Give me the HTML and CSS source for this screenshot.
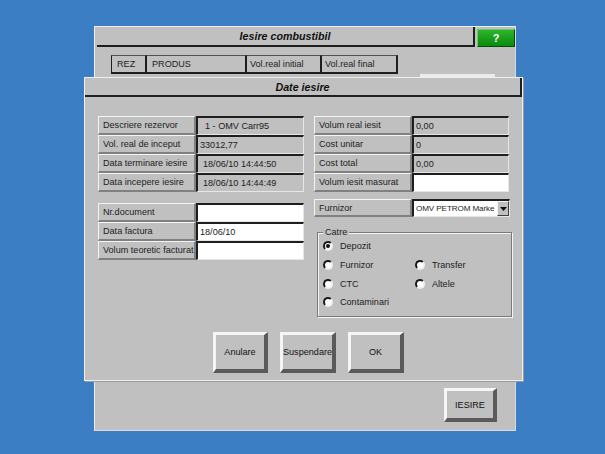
FILE: index.html
```html
<!DOCTYPE html>
<html>
<head>
<meta charset="utf-8">
<link rel="stylesheet" href="styles.css">
</head>
<body>
<div class="win back">
  <div class="win-head">
    <div class="titlebar">Iesire combustibil</div>
    <div class="help">?</div>
  </div>
  <div class="hdr-row">
    <div class="hdr c-rez">REZ</div>
    <div class="hdr c-prod">PRODUS</div>
    <div class="hdr c-vi">Vol.real initial</div>
    <div class="hdr c-vf">Vol.real final</div>
    <div class="hdr-strip"></div>
  </div>
  <div class="back-foot"><button class="btn btn-iesire">IESIRE</button></div>
</div>

<div class="win dlg">
  <div class="dlg-title">Date iesire</div>
  <div class="dlg-body">
    <div class="col left">
      <div class="group">
        <div class="row"><div class="lbl">Descriere rezervor</div><div class="val ind-l">1 - OMV Carr95</div></div>
        <div class="row"><div class="lbl">Vol. real de inceput</div><div class="val">33012,77</div></div>
        <div class="row"><div class="lbl">Data terminare iesire</div><div class="val ind-m">18/06/10 14:44:50</div></div>
        <div class="row"><div class="lbl">Data incepere iesire</div><div class="val ind-m">18/06/10 14:44:49</div></div>
      </div>
      <div class="group group2">
        <div class="row"><div class="lbl">Nr.document</div><div class="val white"></div></div>
        <div class="row"><div class="lbl">Data factura</div><div class="val white">18/06/10</div></div>
        <div class="row"><div class="lbl">Volum teoretic facturat</div><div class="val white"></div></div>
      </div>
    </div>
    <div class="col right">
      <div class="group">
        <div class="row"><div class="lbl">Volum real iesit</div><div class="val">0,00</div></div>
        <div class="row"><div class="lbl">Cost unitar</div><div class="val">0</div></div>
        <div class="row"><div class="lbl">Cost total</div><div class="val">0,00</div></div>
        <div class="row"><div class="lbl">Volum iesit masurat</div><div class="val white"></div></div>
      </div>
      <div class="row furn">
        <div class="lbl">Furnizor</div>
        <div class="combo">
          <span class="combo-text">OMV PETROM Marke</span>
          <span class="combo-btn"><svg width="7" height="4" viewBox="0 0 7 4"><path d="M0 0H7L3.5 4Z" fill="#111"/></svg></span>
        </div>
      </div>
      <div class="catre">
        <span class="legend">Catre</span>
        <div class="radios">
          <div class="radio on"><i></i>Depozit</div>
          <div></div>
          <div class="radio"><i></i>Furnizor</div>
          <div class="radio"><i></i>Transfer</div>
          <div class="radio"><i></i>CTC</div>
          <div class="radio"><i></i>Altele</div>
          <div class="radio"><i></i>Contaminari</div>
        </div>
      </div>
    </div>
  </div>
  <div class="btn-row">
    <button class="btn btn-dlg">Anulare</button>
    <button class="btn btn-dlg">Suspendare</button>
    <button class="btn btn-dlg">OK</button>
  </div>
</div>
</body>
</html>
```

FILE: styles.css
```css
* { box-sizing: border-box; }

body {
  margin: 0;
  width: 605px;
  height: 454px;
  overflow: hidden;
  position: relative;
  background: #3c7ec4;
  font-family: "Liberation Sans", Arial, sans-serif;
  font-size: 9.1px;
  color: #1c1c1c;
}

.win {
  position: absolute;
  background: #c0c0c0;
  display: flex;
  flex-direction: column;
}

/* back window */
.back {
  left: 94px;
  top: 26px;
  width: 422px;
  height: 405px;
  border: 1px solid #eeeeee;
  border-right-color: #dadada;
  border-bottom-color: #dadada;
}

.win-head {
  display: flex;
  height: 20px;
  padding-left: 2px;
  gap: 2px;
}

.titlebar {
  width: 378px;
  height: 20px;
  border-bottom: 2px solid #1e1e1e;
  border-right: 2px solid #1e1e1e;
  display: flex;
  align-items: center;
  justify-content: center;
  font-weight: bold;
  font-style: italic;
  font-size: 10.7px;
  color: #111;
}

.help {
  margin-top: 2px;
  width: 38px;
  height: 18px;
  background: linear-gradient(#2db52d, #0b8a0b);
  border: 1px solid;
  border-color: #62d062 #084808 #084808 #62d062;
  color: #fff;
  font-weight: bold;
  font-size: 11px;
  display: flex;
  align-items: center;
  justify-content: center;
}

.hdr-row {
  display: flex;
  margin-top: 8px;
  margin-left: 16px;
  height: 19px;
}

.hdr {
  height: 19px;
  border-top: 1px solid #505050;
  border-bottom: 2px solid #1e1e1e;
  border-right: 2px solid #1e1e1e;
  padding-left: 4px;
  display: flex;
  align-items: center;
  white-space: nowrap;
}

.c-rez { width: 36px; border-left: 1px solid #1e1e1e; padding-left: 5px; }
.c-prod { width: 100px; padding-left: 5px; }
.c-vi { width: 75px; padding-left: 3px; }
.c-vf { width: 76px; padding-left: 3px; }

.hdr-strip {
  margin-left: 22px;
  width: 75px;
  height: 3px;
  align-self: flex-end;
  margin-bottom: -3px;
  background: #ececec;
}

.back-foot {
  margin-top: auto;
  display: flex;
  justify-content: flex-end;
  padding: 0 18px 8px 0;
}

.btn {
  background: #c0c0c0;
  border-style: solid;
  border-width: 3px 4px 4px 3px;
  border-color: #f6f6f6 #5a5a5a #5a5a5a #f6f6f6;
  font-family: "Liberation Sans", Arial, sans-serif;
  font-size: 9.1px;
  color: #111;
  padding: 0;
  overflow: hidden;
  white-space: nowrap;
  text-align: center;
}

.btn-iesire { width: 53px; height: 34px; }

/* front dialog */
.dlg {
  left: 84px;
  top: 77px;
  width: 439px;
  height: 304px;
  border: 1px solid #efefef;
  box-shadow: 1px 1px 0 #9a9a9a;
}

.dlg-title {
  height: 19px;
  flex: none;
  border-bottom: 2px solid #1e1e1e;
  border-right: 2px solid #1e1e1e;
  display: flex;
  align-items: center;
  justify-content: center;
  font-weight: bold;
  font-style: italic;
  font-size: 10.7px;
  color: #111;
}

.dlg-body {
  display: flex;
  padding: 19px 0 0 13px;
  gap: 10px;
}

.col { display: flex; flex-direction: column; }

.row {
  display: flex;
  height: 19px;
}

.lbl {
  width: 98px;
  flex: none;
  border-style: solid;
  border-width: 1px 2px 2px 1px;
  border-color: #f4f4f4 #808080 #808080 #f4f4f4;
  padding-left: 4px;
  display: flex;
  align-items: center;
  white-space: nowrap;
  overflow: hidden;
}

.val {
  width: 108px;
  flex: none;
  border-style: solid;
  border-width: 2px 1px 1px 2px;
  border-color: #1e1e1e #e6e6e6 #e6e6e6 #1e1e1e;
  padding-left: 2px;
  display: flex;
  align-items: center;
  white-space: nowrap;
  overflow: hidden;
}

.val.ind-l { padding-left: 7px; }
.val.ind-m { padding-left: 5px; }
.val.white { background: #fff; }

.right .val { width: 97px; }

.group2 { margin-top: 11px; }

.furn { margin-top: 7px; height: 18px; }

.combo {
  width: 98px;
  display: flex;
  background: #fff;
  border-style: solid;
  border-width: 2px 1px 1px 2px;
  border-color: #1e1e1e #e6e6e6 #e6e6e6 #1e1e1e;
}

.combo-text {
  flex: 1;
  white-space: nowrap;
  padding-left: 2px;
  display: flex;
  align-items: center;
  font-size: 8.1px;
  letter-spacing: -0.1px;
}

.combo-btn {
  width: 12px;
  flex: none;
  background: #c0c0c0;
  border: 1px solid;
  border-color: #f4f4f4 #404040 #404040 #f4f4f4;
  display: flex;
  align-items: center;
  justify-content: center;
}

.catre {
  position: relative;
  margin-top: 15px;
  margin-left: 3px;
  width: 195px;
  height: 85px;
  border: 1px solid #7a7a7a;
  box-shadow: inset 1px 1px 0 #f4f4f4, 1px 1px 0 #f4f4f4;
  padding: 4px 0 0 5px;
}

.legend {
  position: absolute;
  top: -6px;
  left: 5px;
  padding: 0 2px;
  line-height: 11px;
  background: #c0c0c0;
}

.radios {
  display: grid;
  grid-template-columns: 92px 90px;
  grid-auto-rows: 18.7px;
}

.radio {
  display: flex;
  align-items: center;
  gap: 7px;
  white-space: nowrap;
}

.radio i {
  position: relative;
  flex: none;
  width: 10px;
  height: 10px;
  border-radius: 50%;
  background: #fff;
  border: 2px solid;
  border-color: #1a1a1a #f0f0f0 #f0f0f0 #1a1a1a;
}

.radio.on i::after {
  content: "";
  position: absolute;
  left: 1px;
  top: 1px;
  width: 4px;
  height: 4px;
  border-radius: 50%;
  background: #111;
}

.btn-row {
  display: flex;
  gap: 12px;
  margin-top: 15px;
  padding-left: 128px;
}

.btn-dlg { width: 56px; height: 41px; }
.btn-dlg:first-child { width: 55px; }
```
